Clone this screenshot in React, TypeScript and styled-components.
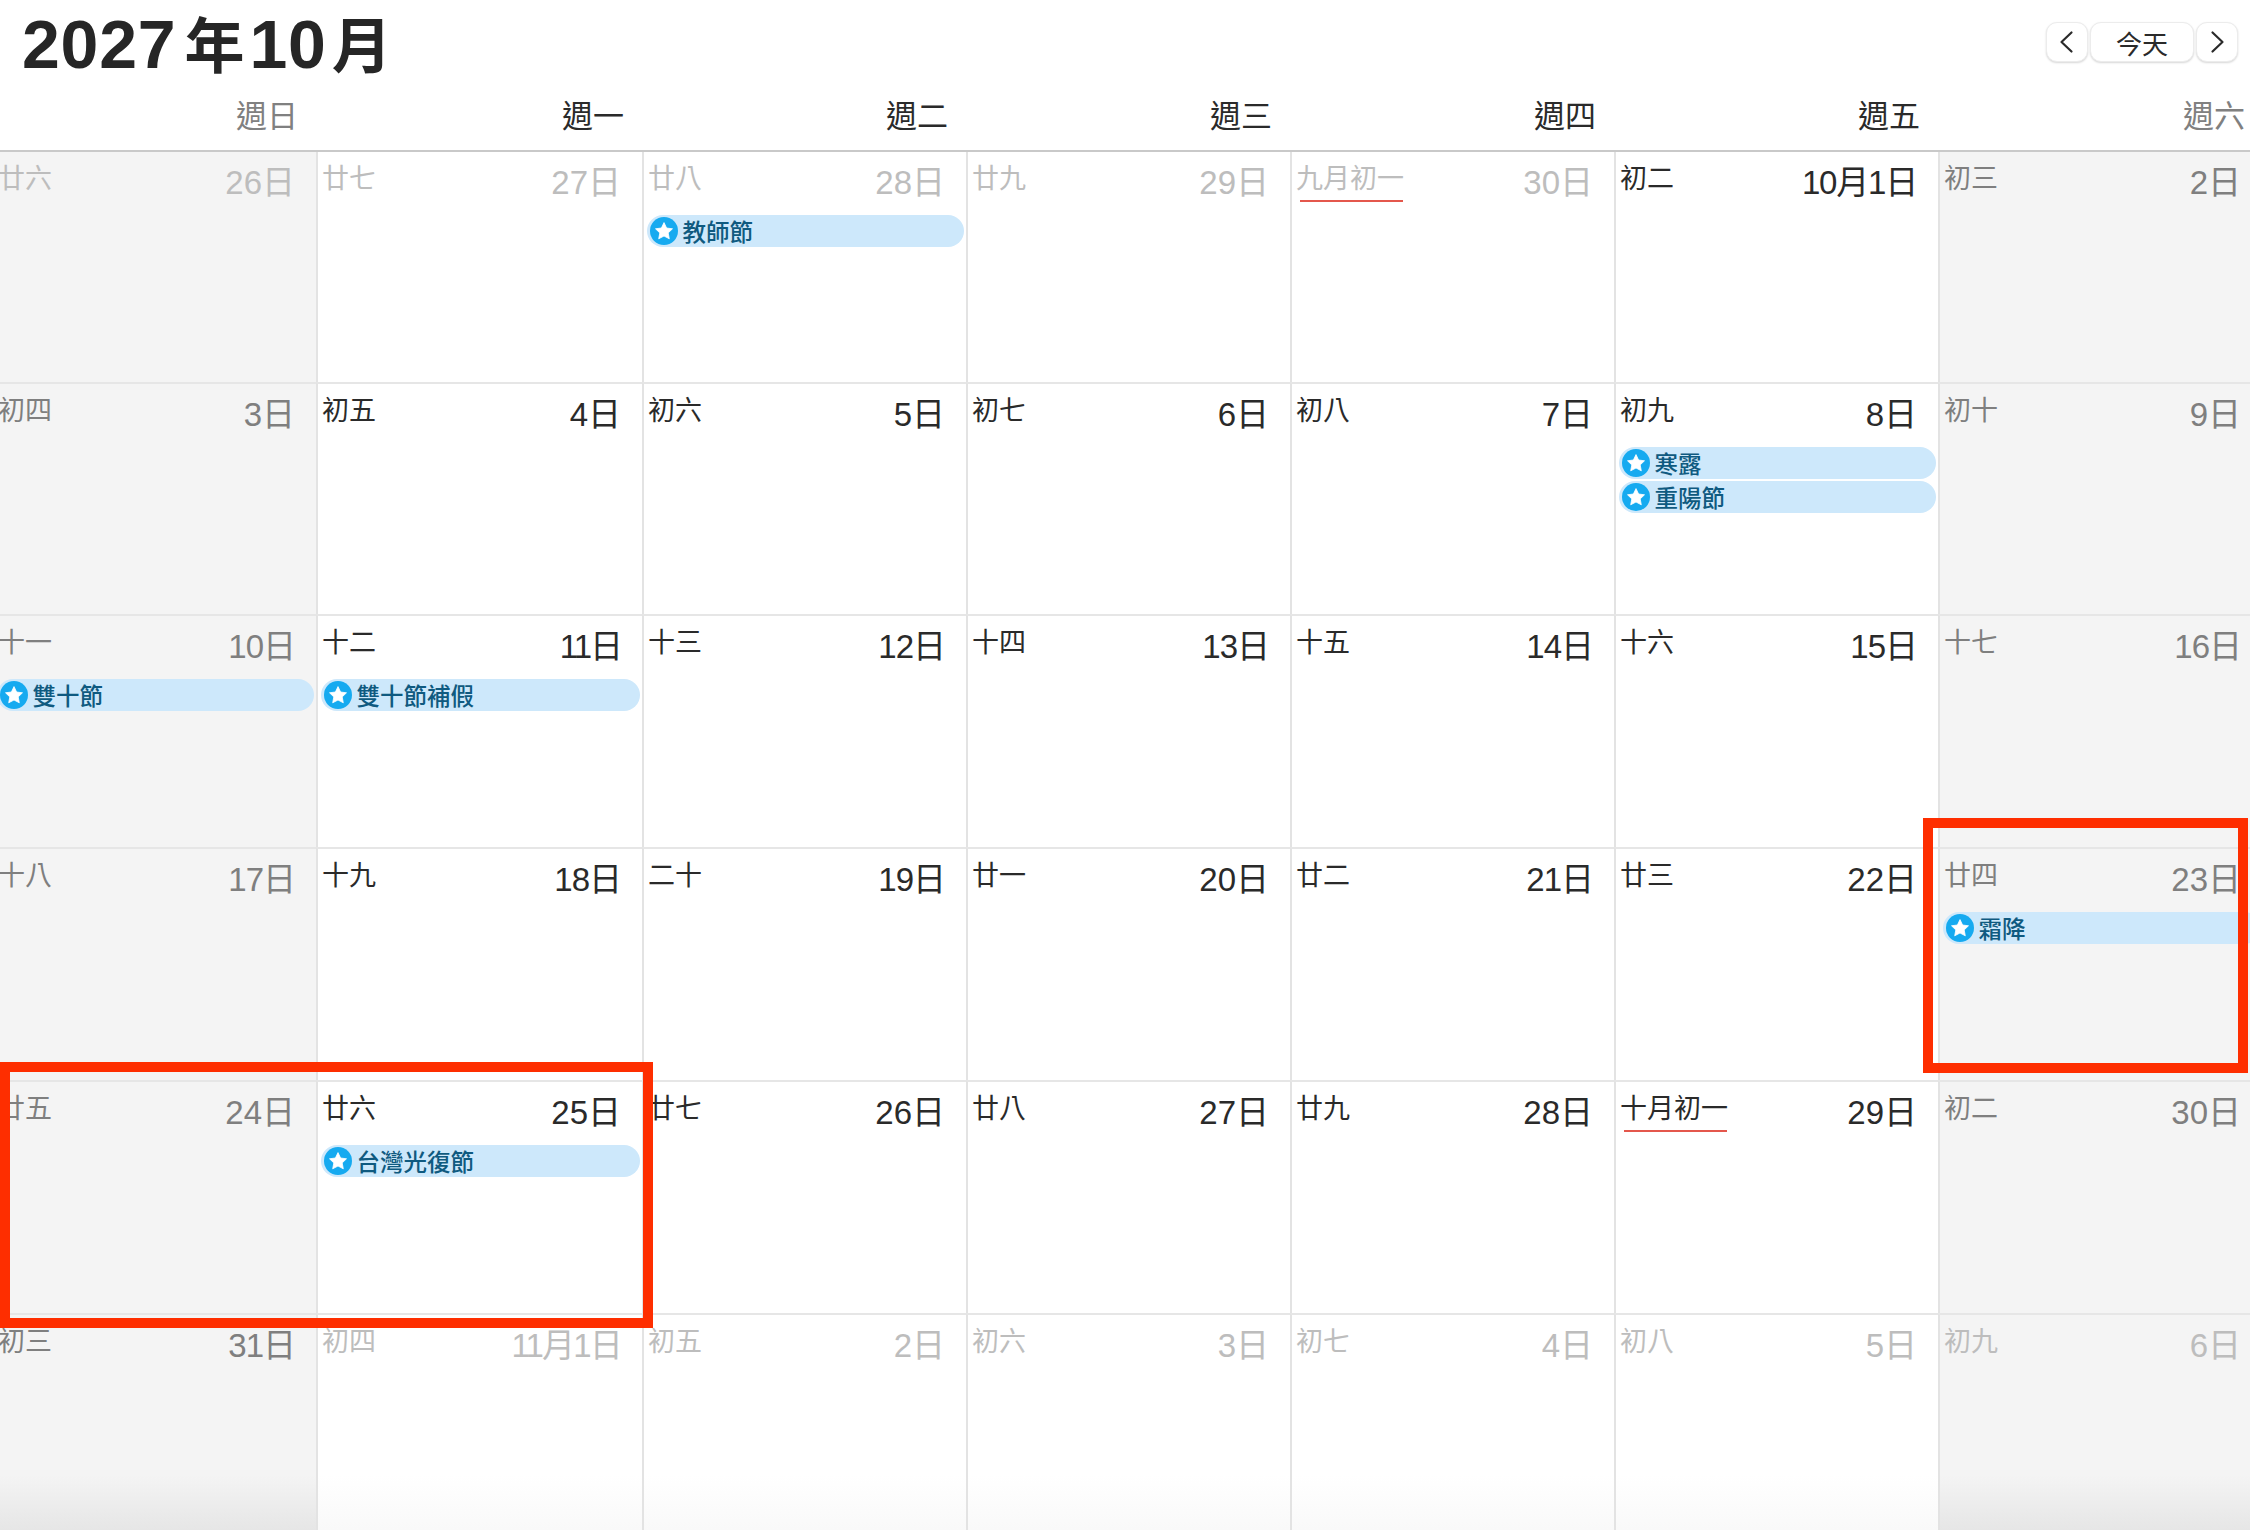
import React from "react";
import styled, { createGlobalStyle } from "styled-components";

const Global = createGlobalStyle`
  html, body { margin: 0; padding: 0; background: #fff; }
  * { box-sizing: border-box; }
`;

const FONT = `"Liberation Sans", "Noto Sans CJK TC", sans-serif`;

const Page = styled.div`
  position: relative;
  width: 2250px;
  height: 1530px;
  overflow: hidden;
  display: flex;
  flex-direction: column;
  background: #fff;
  font-family: ${FONT};
  color: #2a2a2a;
`;

const TopBar = styled.header`
  height: 92px;
  flex: none;
  display: flex;
  justify-content: space-between;
  align-items: flex-start;
  padding: 6px 12px 0 22px;
`;

const Title = styled.h1`
  margin: 0;
  display: flex;
  align-items: baseline;
  font-size: 68px;
  line-height: 76px;
  font-weight: 700;
  color: #262626;
`;

const TitleNumber = styled.span`
  letter-spacing: 0.8px;
`;

const TitleUnit = styled.span<{ $before: number; $after: number }>`
  font-size: 60px;
  margin: 0 ${(p) => p.$after}px 0 ${(p) => p.$before}px;
`;

const Nav = styled.nav`
  display: flex;
  gap: 2px;
  margin-top: 16px;
`;

const NavButton = styled.button<{ $wide?: boolean }>`
  width: ${(p) => (p.$wide ? "104px" : "42px")};
  height: 40px;
  padding: 0;
  display: flex;
  align-items: center;
  justify-content: center;
  background: #fff;
  border: 1px solid #ececec;
  border-radius: 11px;
  box-shadow: 0 1px 2px rgba(0, 0, 0, 0.16);
  font-family: ${FONT};
  font-size: 26px;
  color: #2a2a2a;
`;

const Columns = styled.div`
  display: grid;
  grid-template-columns: 324px 326px repeat(5, 324px);
  margin-left: -8px;
  flex: none;
`;

const WeekHeader = styled(Columns)`
  height: 60px;
  width: 2264px;
  border-bottom: 2px solid #c9c9c9;
`;

const WeekName = styled.div<{ $weekend: boolean; $last?: boolean }>`
  text-align: right;
  padding-right: ${(p) => (p.$last ? "17px" : "18px")};
  padding-top: 6px;
  font-size: 31px;
  line-height: 38px;
  color: ${(p) => (p.$weekend ? "#808080" : "#2a2a2a")};
`;

const Month = styled(Columns)`
  flex: 1;
  min-height: 0;
  grid-template-rows: 230px 232px 233px 233px 233px 1fr;
`;

const Cell = styled.div<{ $weekend: boolean; $fade: boolean }>`
  min-width: 0;
  border-left: 2px solid #e3e3e3;
  padding-top: 10.5px;
  overflow: hidden;
  background: ${(p) => {
    const base = p.$weekend ? "#f4f4f4" : "#ffffff";
    const end = p.$weekend ? "#e6e6e6" : "#f9f9f9";
    return p.$fade ? `linear-gradient(${base} 160px, ${end} 100%)` : base;
  }};
  &:nth-child(n + 8) {
    border-top: 2px solid #e6e6e6;
  }
`;

const CellHead = styled.div`
  display: flex;
  justify-content: space-between;
  align-items: flex-start;
  height: 52px;
  padding: 0 21px 0 4px;
`;

const Lunar = styled.span<{ $color: string; $marked?: boolean }>`
  position: relative;
  font-size: 27px;
  line-height: 32px;
  color: ${(p) => p.$color};
  ${(p) =>
    p.$marked
      ? `&::after {
          content: "";
          position: absolute;
          left: 4px;
          right: 1px;
          bottom: -7px;
          height: 2px;
          background: #e4574c;
        }`
      : ""}
`;

const DateLabel = styled.span<{ $color: string; $tight: number }>`
  margin-top: 2px;
  font-size: 33px;
  line-height: 36px;
  letter-spacing: ${(p) => p.$tight}px;
  color: ${(p) => p.$color};
`;

const Pill = styled.div`
  height: 32px;
  margin: 0 2px 2px 3px;
  padding-left: 3px;
  display: flex;
  align-items: center;
  gap: 4.5px;
  border-radius: 16px;
  background: #cde8fb;
  color: #0f5a80;
  font-size: 23.5px;
  font-weight: 500;
  white-space: nowrap;
`;

const Highlight = styled.div<{ $x: number; $y: number; $w: number; $h: number }>`
  position: absolute;
  left: ${(p) => p.$x}px;
  top: ${(p) => p.$y}px;
  width: ${(p) => p.$w}px;
  height: ${(p) => p.$h}px;
  border: 10px solid #fe2e00;
  pointer-events: none;
`;

const StarBadge = () => (
  <svg width="28" height="28" viewBox="0 0 28 28" style={{ flex: "none" }}>
    <circle cx="14" cy="14" r="14" fill="#16aaf0" />
    <path
      d="M14 5.6l2.6 5.4 5.9.8-4.3 4.1 1.1 5.9L14 19l-5.3 2.8 1.1-5.9-4.3-4.1 5.9-.8z"
      fill="#fff"
      stroke="#fff"
      strokeWidth="0.8"
      strokeLinejoin="round"
    />
  </svg>
);

const Chevron = ({ dir }: { dir: "left" | "right" }) => (
  <svg width="16" height="24" viewBox="0 0 16 24" fill="none">
    <path
      d={dir === "left" ? "M12.5 2.5 L2.5 12 L12.5 21.5" : "M3.5 2.5 L13.5 12 L3.5 21.5"}
      stroke="#2a2a2a"
      strokeWidth="2.2"
      strokeLinecap="round"
      strokeLinejoin="round"
    />
  </svg>
);

type Day = { lunar: string; date: string; muted?: boolean; marked?: boolean; events?: string[] };

const WEEKS: Day[][] = [
  [
    { lunar: "廿六", date: "26日", muted: true },
    { lunar: "廿七", date: "27日", muted: true },
    { lunar: "廿八", date: "28日", muted: true, events: ["教師節"] },
    { lunar: "廿九", date: "29日", muted: true },
    { lunar: "九月初一", date: "30日", muted: true, marked: true },
    { lunar: "初二", date: "10月1日" },
    { lunar: "初三", date: "2日" },
  ],
  [
    { lunar: "初四", date: "3日" },
    { lunar: "初五", date: "4日" },
    { lunar: "初六", date: "5日" },
    { lunar: "初七", date: "6日" },
    { lunar: "初八", date: "7日" },
    { lunar: "初九", date: "8日", events: ["寒露", "重陽節"] },
    { lunar: "初十", date: "9日" },
  ],
  [
    { lunar: "十一", date: "10日", events: ["雙十節"] },
    { lunar: "十二", date: "11日", events: ["雙十節補假"] },
    { lunar: "十三", date: "12日" },
    { lunar: "十四", date: "13日" },
    { lunar: "十五", date: "14日" },
    { lunar: "十六", date: "15日" },
    { lunar: "十七", date: "16日" },
  ],
  [
    { lunar: "十八", date: "17日" },
    { lunar: "十九", date: "18日" },
    { lunar: "二十", date: "19日" },
    { lunar: "廿一", date: "20日" },
    { lunar: "廿二", date: "21日" },
    { lunar: "廿三", date: "22日" },
    { lunar: "廿四", date: "23日", events: ["霜降"] },
  ],
  [
    { lunar: "廿五", date: "24日" },
    { lunar: "廿六", date: "25日", events: ["台灣光復節"] },
    { lunar: "廿七", date: "26日" },
    { lunar: "廿八", date: "27日" },
    { lunar: "廿九", date: "28日" },
    { lunar: "十月初一", date: "29日", marked: true },
    { lunar: "初二", date: "30日" },
  ],
  [
    { lunar: "初三", date: "31日" },
    { lunar: "初四", date: "11月1日", muted: true },
    { lunar: "初五", date: "2日", muted: true },
    { lunar: "初六", date: "3日", muted: true },
    { lunar: "初七", date: "4日", muted: true },
    { lunar: "初八", date: "5日", muted: true },
    { lunar: "初九", date: "6日", muted: true },
  ],
];

const NAMES = ["週日", "週一", "週二", "週三", "週四", "週五", "週六"];

const toneOf = (muted: boolean | undefined, weekend: boolean) =>
  muted ? "#bdbdbd" : weekend ? "#7f7f7f" : "#2a2a2a";

/* The digit 1 is narrower in the reference's face: tighten labels that hold it. */
const tightOf = (date: string) => (-3 * (date.split("1").length - 1)) / date.length;

export default function App() {
  return (
    <Page>
      <Global />
      <TopBar>
        <Title>
          <TitleNumber>2027</TitleNumber>
          <TitleUnit $before={8} $after={5}>年</TitleUnit>
          <TitleNumber>10</TitleNumber>
          <TitleUnit $before={5} $after={0}>月</TitleUnit>
        </Title>
        <Nav>
          <NavButton aria-label="上一月">
            <Chevron dir="left" />
          </NavButton>
          <NavButton $wide>今天</NavButton>
          <NavButton aria-label="下一月">
            <Chevron dir="right" />
          </NavButton>
        </Nav>
      </TopBar>
      <WeekHeader>
        {NAMES.map((n, i) => (
          <WeekName key={n} $weekend={i === 0 || i === 6} $last={i === 6}>
            {n}
          </WeekName>
        ))}
      </WeekHeader>
      <Month>
        {WEEKS.flatMap((week, w) =>
          week.map((d, i) => {
            const weekend = i === 0 || i === 6;
            const tone = toneOf(d.muted, weekend);
            return (
              <Cell key={`${w}-${i}`} $weekend={weekend} $fade={w === 5}>
                <CellHead>
                  <Lunar $color={tone} $marked={d.marked}>
                    {d.lunar}
                  </Lunar>
                  <DateLabel $color={tone} $tight={tightOf(d.date)}>
                    {d.date}
                  </DateLabel>
                </CellHead>
                {d.events?.map((e) => (
                  <Pill key={e}>
                    <StarBadge />
                    {e}
                  </Pill>
                ))}
              </Cell>
            );
          })
        )}
      </Month>
      <Highlight $x={1923} $y={818} $w={325} $h={255} />
      <Highlight $x={0} $y={1062} $w={653} $h={266} />
    </Page>
  );
}
